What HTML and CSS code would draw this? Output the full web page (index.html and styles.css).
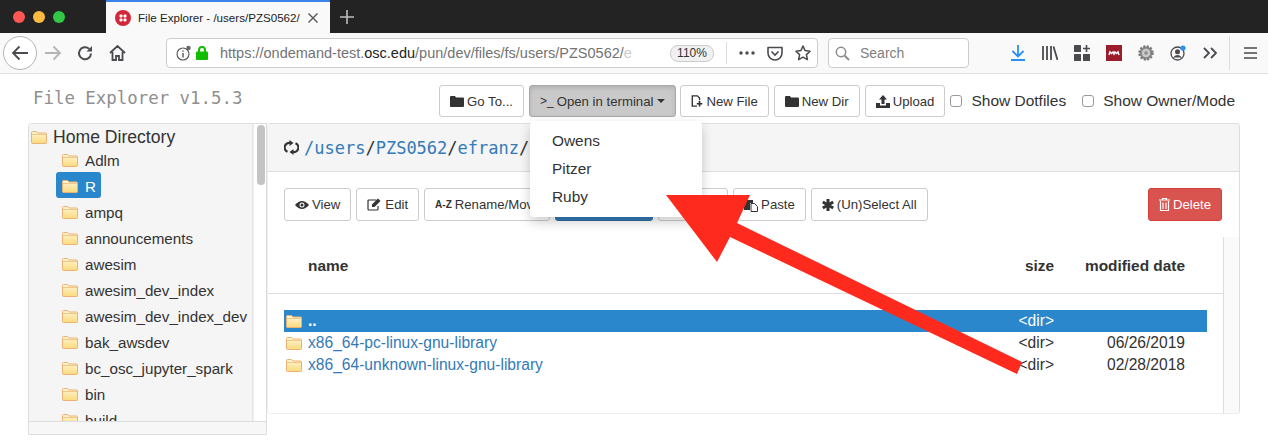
FILE: index.html
```html
<!DOCTYPE html>
<html>

<head>
    <title>File Explorer</title>
    <link rel="stylesheet" href="styles.css">
</head>

<body>
    <svg class="defs" width="0" height="0">
        <defs>
            <linearGradient id="fold" x1="0" y1="0" x2="0" y2="1">
                <stop offset="0" stop-color="#fff6d6" />
                <stop offset="1" stop-color="#f9da7c" />
            </linearGradient>
            <symbol id="folder" viewBox="0 0 16 14">
                <path d="M.5 12.5V2.5q0-1 1-1h4l1.500 1.500h7.500q1 0 1 1v8.500q0 1-1 1h-13q-1 0-1-1z" fill="url(#fold)" stroke="#eab274" />
                <path d="M1 4.500h14" stroke="#f0c88a" fill="none" />
            </symbol>
            <symbol id="closed" viewBox="0 0 14 12">
                <path d="M0 2q0-1 1-1h4l1 1.500h7q1 0 1 1V11q0 1-1 1H1q-1 0-1-1z" fill="#333" />
            </symbol>
        </defs>
    </svg>

    <div class="tabbar">
        <div class="lights">
            <span class="light red"></span>
            <span class="light yellow"></span>
            <span class="light green"></span>
        </div>
        <div class="tab">
            <svg class="favicon" width="16" height="16" viewBox="0 0 16 16">
                <circle cx="8" cy="8" r="8" fill="#d2263a" />
                <g fill="#fff">
                    <rect x="4.500" y="4.500" width="3" height="3" rx="1" />
                    <rect x="8.500" y="4.500" width="3" height="3" rx="1" />
                    <rect x="4.500" y="8.500" width="3" height="3" rx="1" />
                    <rect x="8.500" y="8.500" width="3" height="3" rx="1" />
                </g>
            </svg>
            <span class="tab-title">File Explorer - /users/PZS0562/</span>
            <svg width="10" height="10" viewBox="0 0 10 10">
                <path d="M.5.5l9 9M9.500.5l-9 9" stroke="#555" stroke-width="1.400" />
            </svg>
        </div>
        <svg class="newtab" width="14" height="14" viewBox="0 0 14 14">
            <path d="M7 0v14M0 7h14" stroke="#bdbdbd" stroke-width="1.600" />
        </svg>
    </div>

    <div class="navbar">
        <div class="nav-btn back">
            <svg width="18" height="16" viewBox="0 0 18 16">
                <path d="M17 8H2M8.500 1.500L2 8l6.500 6.500" fill="none" stroke="#4a4a4f" stroke-width="1.800" />
            </svg>
        </div>
        <div class="nav-btn fwd">
            <svg width="18" height="16" viewBox="0 0 18 16">
                <path d="M1 8h15M9.500 1.500L16 8l-6.500 6.500" fill="none" stroke="#b5b5b5" stroke-width="1.800" />
            </svg>
        </div>
        <div class="nav-btn">
            <svg width="16" height="16" viewBox="0 0 16 16">
                <path d="M14 8.500a6 6 0 1 1-1.800-4.600" fill="none" stroke="#4a4a4f" stroke-width="2" />
                <path d="M15 1v5.500H9.500z" fill="#4a4a4f" />
            </svg>
        </div>
        <div class="nav-btn">
            <svg width="17" height="16" viewBox="0 0 17 16">
                <path d="M1 8l7.500-7 7.500 7M3.500 7v8h3.500v-4h3v4h3.500V7" fill="none" stroke="#4a4a4f" stroke-width="1.800" />
            </svg>
        </div>

        <div class="urlbar">
            <svg class="info" width="16" height="16" viewBox="0 0 16 16">
                <circle cx="7" cy="9" r="6" fill="none" stroke="#555" stroke-width="1.100" />
                <path d="M7 8v4.500M7 5.500v1.200" stroke="#555" stroke-width="1.400" />
                <circle cx="12.500" cy="3" r="2.200" fill="#666" />
            </svg>
            <svg class="lock" width="12" height="14" viewBox="0 0 12 14">
                <path d="M3 6V4a3 3 0 0 1 6 0v2" fill="none" stroke="#12bc00" stroke-width="2" />
                <rect y="5.500" width="12" height="8.500" rx="1" fill="#12bc00" />
            </svg>
            <span class="url">https://ondemand-test.<b>osc.edu</b>/pun/dev/files/fs/users/PZS0562/<i>e</i></span>
            <span class="zoom">110%</span>
            <span class="url-sep"></span>
            <svg class="dots" width="16" height="4" viewBox="0 0 16 4">
                <circle cx="2" cy="2" r="1.700" fill="#4a4a4f" />
                <circle cx="8" cy="2" r="1.700" fill="#4a4a4f" />
                <circle cx="14" cy="2" r="1.700" fill="#4a4a4f" />
            </svg>
            <svg class="pocket" width="16" height="15" viewBox="0 0 16 15">
                <path d="M1 1.500h14v5.500a7 7 0 0 1-14 0z" fill="none" stroke="#4a4a4f" stroke-width="1.600" stroke-linejoin="round" />
                <path d="M4.500 5.500L8 9l3.500-3.500" fill="none" stroke="#4a4a4f" stroke-width="1.600" />
            </svg>
            <svg class="star" width="16" height="16" viewBox="0 0 16 16">
                <path d="M8 1l2.100 4.600 5 .6-3.700 3.400 1 5L8 12.100 3.600 14.600l1-5L.9 6.200l5-.6z" fill="none" stroke="#4a4a4f" stroke-width="1.500" stroke-linejoin="round" />
            </svg>
        </div>

        <div class="searchbar">
            <svg width="15" height="15" viewBox="0 0 15 15">
                <circle cx="6" cy="6" r="4.700" fill="none" stroke="#8a8a8a" stroke-width="1.500" />
                <path d="M9.500 9.500L14 14" stroke="#8a8a8a" stroke-width="1.800" />
            </svg>
            <span>Search</span>
        </div>

        <div class="tools">
            <div class="tool">
                <svg width="14" height="16" viewBox="0 0 14 16">
                    <path d="M7 0v11M1.500 6L7 11.500 12.500 6M0 15h14" fill="none" stroke="#2a90f5" stroke-width="1.800" />
                </svg>
            </div>
            <div class="tool">
                <svg width="16" height="14" viewBox="0 0 16 14">
                    <path d="M1 0v14M5 0v14M9 0v14M11.500.5L15.500 14" fill="none" stroke="#4a4a4f" stroke-width="1.800" />
                </svg>
            </div>
            <div class="tool">
                <svg width="16" height="16" viewBox="0 0 16 16">
                    <rect width="7" height="7" rx=".5" fill="#4a4a4f" />
                    <rect y="9" width="7" height="7" rx=".5" fill="#4a4a4f" />
                    <rect x="9" y="9" width="7" height="7" rx=".5" fill="#4a4a4f" />
                    <path d="M12.500 0v7M9 3.500h7" stroke="#4a4a4f" stroke-width="1.600" />
                </svg>
            </div>
            <div class="tool">
                <svg width="16" height="16" viewBox="0 0 16 16">
                    <rect width="16" height="16" fill="#9b1c2a" />
                    <path d="M3 10l1-3 1.500 1.500L7 7l1 2 1-2 1.500 1.500L12 7l1 3" fill="none" stroke="#fff" stroke-width="1.500" />
                </svg>
            </div>
            <div class="tool">
                <svg width="16" height="16" viewBox="0 0 16 16">
                    <circle cx="8" cy="8" r="6.500" fill="#8c8c8c" stroke="#777" stroke-width="2.500" stroke-dasharray="2 1.400" />
                    <circle cx="8" cy="8" r="4.200" fill="#c9c9c9" />
                    <circle cx="8" cy="8" r="1.800" fill="#8c8c8c" />
                </svg>
            </div>
            <div class="tool">
                <svg width="16" height="16" viewBox="0 0 16 16">
                    <circle cx="7.500" cy="8.500" r="6.500" fill="none" stroke="#4a4a4f" stroke-width="1.300" />
                    <circle cx="7.500" cy="6.800" r="2.500" fill="#4a4a4f" />
                    <path d="M3.500 12.500q4-4 8 0" fill="#4a4a4f" stroke="#4a4a4f" />
                    <circle cx="13" cy="3" r="2.600" fill="#2a90f5" />
                </svg>
            </div>
            <div class="tool">
                <svg width="14" height="12" viewBox="0 0 14 12">
                    <path d="M1 1l5 5-5 5M8 1l5 5-5 5" fill="none" stroke="#4a4a4f" stroke-width="1.800" />
                </svg>
            </div>
            <span class="tool-sep"></span>
            <div class="tool menu">
                <svg width="13" height="12" viewBox="0 0 13 12">
                    <path d="M0 1h13M0 6h13M0 11h13" stroke="#4a4a4f" stroke-width="1.700" />
                </svg>
            </div>
        </div>
    </div>

    <div class="page">
        <div class="head">
            <h1>File Explorer v1.5.3</h1>
            <div class="actions">
                <a class="btn">
                    <svg class="ico" width="14" height="12"><use href="#closed" /></svg>
                    Go To...
                </a>
                <div class="dropdown">
                    <a class="btn pressed"><span class="prompt">&gt;_</span> Open in terminal <span class="caret"></span></a>
                    <ul class="menu-list">
                        <li>Owens</li>
                        <li>Pitzer</li>
                        <li>Ruby</li>
                    </ul>
                </div>
                <a class="btn">
                    <svg class="ico" width="12" height="14" viewBox="0 0 14 14">
                        <path d="M7 13H1.500V1h6L10 3.500V6" fill="none" stroke="#333" stroke-width="1.600" />
                        <path d="M10 7v6.500M6.700 10.200h6.600" stroke="#333" stroke-width="2" />
                    </svg>
                    New File
                </a>
                <a class="btn">
                    <svg class="ico" width="14" height="12"><use href="#closed" /></svg>
                    New Dir
                </a>
                <a class="btn">
                    <svg class="ico" width="14" height="13" viewBox="0 0 14 13">
                        <path d="M7 0l4 4.500H8.500V9h-3V4.500H3z" fill="#333" />
                        <path d="M0 8h4v2.500h6V8h4v5H0z" fill="#333" />
                    </svg>
                    Upload
                </a>
                <label class="check"><input type="checkbox"> Show Dotfiles</label>
                <label class="check"><input type="checkbox"> Show Owner/Mode</label>
            </div>
        </div>

        <div class="cols">
            <div class="tree">
                <div class="tree-list">
                    <div class="tree-home">
                        <svg class="fld" width="16" height="14"><use href="#folder" /></svg>
                        Home Directory
                    </div>
                    <div class="node"><svg class="fld" width="16" height="14"><use href="#folder" /></svg>Adlm</div>
                    <div class="node"><span class="node-on"><svg class="fld" width="16" height="14"><use href="#folder" /></svg>R</span></div>
                    <div class="node"><svg class="fld" width="16" height="14"><use href="#folder" /></svg>ampq</div>
                    <div class="node"><svg class="fld" width="16" height="14"><use href="#folder" /></svg>announcements</div>
                    <div class="node"><svg class="fld" width="16" height="14"><use href="#folder" /></svg>awesim</div>
                    <div class="node"><svg class="fld" width="16" height="14"><use href="#folder" /></svg>awesim_dev_index</div>
                    <div class="node"><svg class="fld" width="16" height="14"><use href="#folder" /></svg>awesim_dev_index_dev</div>
                    <div class="node"><svg class="fld" width="16" height="14"><use href="#folder" /></svg>bak_awsdev</div>
                    <div class="node"><svg class="fld" width="16" height="14"><use href="#folder" /></svg>bc_osc_jupyter_spark</div>
                    <div class="node"><svg class="fld" width="16" height="14"><use href="#folder" /></svg>bin</div>
                    <div class="node"><svg class="fld" width="16" height="14"><use href="#folder" /></svg>build</div>
                </div>
                <div class="tree-scroll"><span class="thumb"></span></div>
                <div class="tree-foot"></div>
            </div>

            <div class="panel">
                <div class="panel-head">
                    <svg class="refresh" width="15" height="15" viewBox="0 0 15 15">
                        <path d="M6 3A4.600 4.600 0 0 0 3.500 11.800M9 12A4.600 4.600 0 0 0 11.500 3.200" fill="none" stroke="#333" stroke-width="2.200" />
                        <path d="M5.500 0v6L9.500 3zM9.500 15V9L5.500 12z" fill="#333" />
                    </svg>
                    <span class="crumbs"><a>/users</a>/<a>PZS0562</a>/<a>efranz</a>/<a>R</a></span>
                </div>
                <div class="panel-tools">
                    <a class="btn">
                        <svg class="ico" width="14" height="10" viewBox="0 0 14 10">
                            <path d="M0 5q7-8 14 0-7 8-14 0z" fill="#333" />
                            <circle cx="7" cy="5" r="2.500" fill="#fff" />
                            <circle cx="7" cy="5" r="1.500" fill="#333" />
                        </svg>
                        View
                    </a>
                    <a class="btn">
                        <svg class="ico" width="15" height="13" viewBox="0 0 14 13">
                            <path d="M9 2H1.500q-1 0-1 1v8q0 1 1 1h8q1 0 1-1V8" fill="none" stroke="#333" stroke-width="1.200" />
                            <path d="M4.500 6.500l6-6 2.500 2.500-6 6H4.500z" fill="#333" />
                        </svg>
                        Edit
                    </a>
                    <a class="btn btn-rename"><span class="az">A-Z</span> Rename/Move</a>
                    <a class="btn btn-primary">Download</a>
                    <a class="btn btn-copy">Copy</a>
                    <a class="btn">
                        <svg class="ico" width="14" height="14" viewBox="0 0 14 14">
                            <path d="M0 2h9v3H6v7H0z" fill="#333" />
                            <path d="M7 5.500h3.500L13.500 8.500V13.500H7z" fill="#fff" stroke="#333" />
                        </svg>
                        Paste
                    </a>
                    <a class="btn">
                        <svg class="ico" width="12" height="12" viewBox="0 0 12 12">
                            <path d="M6 0v12M.8 3l10.400 6M11.200 3L.8 9" stroke="#333" stroke-width="3" />
                        </svg>
                        (Un)Select All
                    </a>
                    <a class="btn btn-danger">
                        <svg class="ico" width="11" height="13" viewBox="0 0 11 13">
                            <path d="M0 2h11M3.500 2V.5h4V2M1.500 3v9.500h8V3M4 4.500v6.500M7 4.500v6.500" fill="none" stroke="#fff" stroke-width="1.200" />
                        </svg>
                        Delete
                    </a>
                </div>
                <div class="table-wrap">
                    <div class="table-main">
                        <div class="row row-head">
                            <span class="c-name">name</span>
                            <span class="c-size">size</span>
                            <span class="c-date">modified date</span>
                        </div>
                        <div class="rows">
                            <div class="row row-on">
                                <svg class="fld" width="16" height="14"><use href="#folder" /></svg>
                                <a class="c-name">..</a>
                                <span class="c-size">&lt;dir&gt;</span>
                                <span class="c-date"></span>
                            </div>
                            <div class="row">
                                <svg class="fld" width="16" height="14"><use href="#folder" /></svg>
                                <a class="c-name">x86_64-pc-linux-gnu-library</a>
                                <span class="c-size">&lt;dir&gt;</span>
                                <span class="c-date">06/26/2019</span>
                            </div>
                            <div class="row">
                                <svg class="fld" width="16" height="14"><use href="#folder" /></svg>
                                <a class="c-name">x86_64-unknown-linux-gnu-library</a>
                                <span class="c-size">&lt;dir&gt;</span>
                                <span class="c-date">02/28/2018</span>
                            </div>
                        </div>
                    </div>
                    <div class="table-side"></div>
                </div>
            </div>
        </div>
    </div>

    <svg class="arrow" width="1268" height="441" viewBox="0 0 1268 441">
        <polygon points="666,195 750,195 737,223 1022,362 1017,374 730,237 717,262" fill="#fe2a1e" />
    </svg>
</body>

</html>
```

FILE: styles.css
```css
html, body {
    margin: 0;
    height: 441px;
    overflow: hidden;
    background: #fff;
    font-family: "Liberation Sans", Arial, sans-serif;
    color: #333;
}

.defs {
    display: block;
    height: 0;
}

/* browser chrome */
.tabbar {
    display: flex;
    align-items: stretch;
    height: 33px;
    background: #232323;
}

.lights {
    display: flex;
    align-items: center;
    gap: 8px;
    width: 93px;
    padding-left: 13px;
}

.light {
    width: 12px;
    height: 12px;
    border-radius: 50%;
}

.red { background: #fc5753; }
.yellow { background: #fdbc40; }
.green { background: #33c748; }

.tab {
    display: flex;
    align-items: center;
    width: 224px;
    box-sizing: border-box;
    padding: 0 12px 0 9px;
    background: #f9f9fa;
    border-top: 2px solid #3c82e8;
}

.favicon {
    margin-right: 7px;
}

.tab-title {
    flex: 1;
    font-size: 11.600px;
    color: #222;
    white-space: nowrap;
}

.newtab {
    align-self: center;
    margin-left: 10px;
}

.navbar {
    display: flex;
    align-items: center;
    height: 40px;
    background: #f9f9fa;
    border-bottom: 1px solid #e0e0e1;
}

.nav-btn {
    display: flex;
    flex: none;
    align-items: center;
    justify-content: center;
    width: 32px;
    height: 34px;
}

.back {
    width: 32px;
    margin: 0 0 0 3px;
    border: 1px solid #b4b4b4;
    border-radius: 50%;
    background: #fff;
    height: 32px;
}

.urlbar {
    display: flex;
    flex: none;
    align-items: center;
    width: 652px;
    height: 30px;
    box-sizing: border-box;
    margin-left: 33px;
    padding: 0 6px 0 9px;
    background: #fff;
    border: 1px solid #ccc;
    border-radius: 4px;
}

.lock {
    margin-left: 4px;
}

.url {
    flex: 1;
    margin-left: 12px;
    font-size: 14.500px;
    color: #737373;
    white-space: nowrap;
    overflow: hidden;
}

.url b {
    font-weight: normal;
    color: #222;
}

.url i {
    font-style: normal;
    color: #ccc;
}

.zoom {
    width: 44px;
    box-sizing: border-box;
    text-align: center;
    font-size: 12px;
    line-height: 15px;
    background: #f0f0f0;
    border: 1px solid #ccc;
    border-radius: 8px;
}

.url-sep {
    width: 1px;
    height: 22px;
    margin: 0 12px;
    background: #ddd;
}

.pocket {
    margin-left: 12px;
}

.star {
    margin-left: 12px;
}

.searchbar {
    display: flex;
    flex: none;
    align-items: center;
    gap: 10px;
    width: 141px;
    height: 30px;
    box-sizing: border-box;
    margin-left: 10px;
    padding-left: 6px;
    background: #fff;
    border: 1px solid #ccc;
    border-radius: 4px;
    font-size: 14px;
    color: #808080;
}

.tools {
    display: flex;
    align-items: center;
    margin-left: 33px;
}

.tool {
    display: flex;
    justify-content: center;
    width: 32px;
}

.tool-sep {
    width: 1px;
    height: 34px;
    margin-left: 3px;
    background: #ddd;
}

.menu {
    width: 40px;
}

/* page */
.head {
    display: flex;
    align-items: center;
    justify-content: space-between;
    height: 49px;
    padding: 0 33px;
}

h1 {
    margin: 0 0 1px;
    font: normal 17.400px "DejaVu Sans Mono", monospace;
    color: #8f8f8f;
}

.actions {
    display: flex;
    align-items: center;
    gap: 5px;
    padding-top: 5px;
}

.btn {
    display: inline-flex;
    align-items: center;
    gap: 3px;
    height: 32px;
    box-sizing: border-box;
    padding: 0 10px;
    background: #fff;
    border: 1px solid #ccc;
    border-radius: 3px;
    font-size: 13.200px;
    white-space: nowrap;
}

.ico {
    flex: none;
}

.pressed {
    gap: 3px;
    background: #c9c9c9;
    border-color: #a8a8a8;
    box-shadow: inset 0 2px 4px rgba(0, 0, 0, .12);
}

.prompt {
    font-size: 12px;
}

.caret {
    margin-left: 1px;
    border-top: 4px solid #333;
    border-left: 4px solid transparent;
    border-right: 4px solid transparent;
}

.dropdown {
    position: relative;
    margin-right: -1px;
}

.menu-list {
    position: absolute;
    top: 36px;
    left: 1px;
    z-index: 5;
    width: 172px;
    box-sizing: border-box;
    margin: 0;
    padding: 6px 0;
    list-style: none;
    background: #fff;
    border-radius: 4px;
    box-shadow: 0 5px 12px rgba(0, 0, 0, .2);
    font-size: 15.400px;
}

.menu-list li {
    height: 28px;
    line-height: 28px;
    padding-left: 22px;
}

.check {
    display: flex;
    align-items: center;
    gap: 9px;
    font-size: 15.500px;
}

.check + .check {
    margin-left: 11px;
}

.check input {
    appearance: none;
    box-sizing: border-box;
    width: 12px;
    height: 12px;
    margin: 0;
    background: #fff;
    border: 1px solid #999;
    border-radius: 3px;
}

.cols {
    display: flex;
    align-items: flex-start;
    padding-left: 28px;
}

/* directory tree */
.tree {
    display: grid;
    grid-template-columns: 224px 15px;
    grid-template-rows: 297px 15px;
    width: 239px;
    height: 312px;
    box-sizing: border-box;
    border: 1px solid #ddd;
    border-top-left-radius: 4px;
    overflow: hidden;
}

.tree-list {
    overflow: hidden;
    box-sizing: border-box;
    padding-top: 4px;
    background: #f5f5f5;
    border-right: 1px solid #e5e5e5;
    font-size: 15.200px;
}

.tree-home {
    display: flex;
    align-items: center;
    gap: 6px;
    height: 18px;
    padding-left: 2px;
    font-size: 17.600px;
}

.node {
    display: flex;
    align-items: center;
    height: 26px;
    box-sizing: border-box;
    padding: 2px 0 0 33px;
    white-space: nowrap;
}

.node .fld {
    margin-right: 7px;
    flex: none;
}

.node-on {
    display: flex;
    align-items: center;
    height: 26px;
    box-sizing: border-box;
    margin: -2px 0 0 -6px;
    padding: 2px 5px 0 6px;
    background: #2b87cc;
    border-radius: 3px;
    color: #fff;
}

.tree-scroll {
    background: #fff;
    border-left: 1px solid #eee;
}

.thumb {
    display: block;
    width: 8px;
    height: 60px;
    margin: 1px 0 0 3px;
    background: #c4c4c4;
    border-radius: 4px;
}

.tree-foot {
    grid-column: 1 / 3;
    background: #f7f7f7;
    border-top: 1px solid #ddd;
}

/* right panel */
.panel {
    width: 973px;
    height: 291px;
    box-sizing: border-box;
    border: 1px solid #ddd;
    border-left-color: #eee;
    border-bottom-color: #eee;
    border-radius: 4px;
    overflow: hidden;
}

.panel-head {
    display: flex;
    align-items: center;
    height: 48px;
    box-sizing: border-box;
    padding-left: 16px;
    background: #f5f5f5;
    border-bottom: 1px solid #ddd;
}

.refresh {
    margin-right: 5px;
}

.crumbs {
    font: 17px "DejaVu Sans Mono", monospace;
    color: #333;
}

.crumbs a {
    color: #337ab7;
}

.panel-tools {
    display: flex;
    align-items: center;
    gap: 5px;
    height: 65px;
    padding: 0 17px 0 16px;
    box-sizing: border-box;
}

.panel-tools .btn {
    height: 33px;
}

.btn-rename {
    width: 126px;
    overflow: hidden;
}

.btn-primary {
    background: #337ab7;
    border-color: #2e6da4;
    color: #fff;
    width: 98px;
    justify-content: center;
}

.btn-copy {
    width: 70px;
    justify-content: center;
}

.btn-danger {
    margin-left: auto;
    background: #d9534f;
    border-color: #d43f3a;
    color: #fff;
}

.az {
    font-size: 10px;
    font-weight: bold;
}

.table-wrap {
    display: flex;
    height: 177px;
}

.table-main {
    flex: 1;
}

.table-side {
    width: 15px;
    background: #fafafa;
    border-left: 1px solid #ddd;
}

.row {
    display: flex;
    align-items: center;
    height: 22px;
    margin-right: 16px;
    font-size: 15.600px;
}

.row .fld {
    flex: none;
    margin-left: 2px;
    margin-right: 6px;
}

.row-head {
    height: 54px;
    margin-right: 0;
    padding: 2px 38px 0 40px;
    border-bottom: 1px solid #ddd;
    font-size: 15.400px;
    font-weight: bold;
}

.rows {
    padding: 16px 0 0 16px;
}

.c-name {
    flex: 1;
    color: #337ab7;
}

.row-head .c-name {
    color: #333;
}

.c-size {
    width: 60px;
    text-align: right;
}

.c-date {
    width: 153px;
    padding-right: 22px;
    box-sizing: border-box;
    text-align: right;
}

.row-head .c-date {
    width: 131px;
    padding-right: 0;
}

.row-on {
    background: #2b87cc;
    color: #fff;
}

.row-on .c-name {
    color: #fff;
    font-weight: bold;
}

.arrow {
    position: absolute;
    top: 0;
    left: 0;
    z-index: 10;
    pointer-events: none;
}
```
